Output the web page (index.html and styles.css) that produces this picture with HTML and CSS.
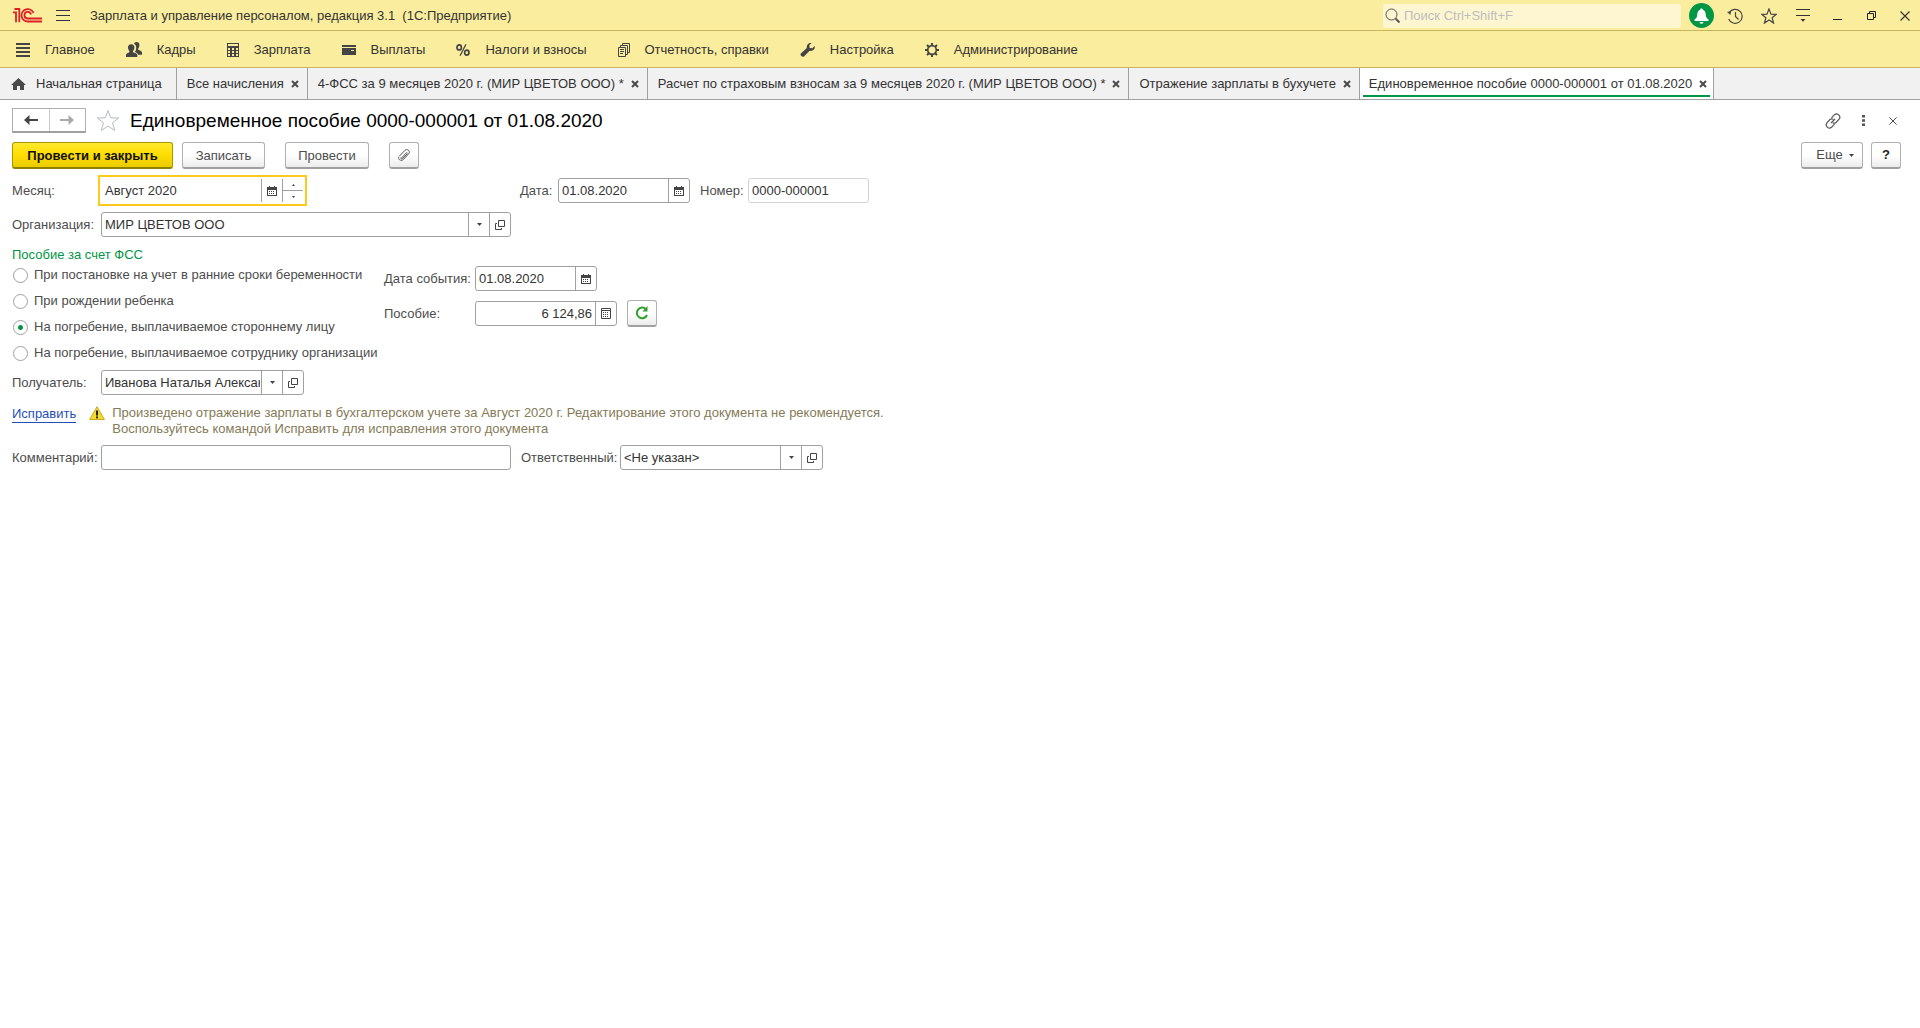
FILE: index.html
```html
<!DOCTYPE html>
<html lang="ru">
<head>
<meta charset="utf-8">
<title>Зарплата и управление персоналом, редакция 3.1 (1С:Предприятие)</title>
<link rel="stylesheet" href="styles.css">
</head>
<body>
<svg class="sprite" aria-hidden="true">
  <symbol id="calendar" viewBox="0 0 10 10"><path d="M0 1h2V0h1v1h4V0h1v1h2v9H0zM1 4v5h8V4z" fill="#444" fill-rule="evenodd"/><path d="M2 5h1v1H2zM4 5h1v1H4zM6 5h1v1H6zM2 7h1v1H2zM4 7h1v1H4zM6 7h1v1H6z" fill="#444"/></symbol>
  <symbol id="calc" viewBox="0 0 10 11"><path d="M.5.5h9v10h-9zM0 2.500h10" fill="none" stroke="#444"/><path d="M2 4h1v1H2zM4 4h1v1H4zM6 4h1v1H6zM2 6h1v1H2zM4 6h1v1H4zM6 6h1v1H6zM2 8h1v1H2zM4 8h1v1H4zM6 8h1v1H6z" fill="#444"/></symbol>
  <symbol id="down" viewBox="0 0 5 3"><path d="M0 0h5L2.500 3z" fill="#444"/></symbol>
  <symbol id="open" viewBox="0 0 10 10"><path d="M3.500.5h6v6h-6zM2 3.500H.5v6h6V8" fill="none" stroke="#444"/></symbol>
  <symbol id="cross" viewBox="0 0 8 8"><path d="M1 1l6 6M7 1L1 7" fill="none" stroke="#4a4a4a" stroke-width="2"/></symbol>
  <symbol id="thin-cross" viewBox="0 0 10 10"><path d="M.5.5l9 9M9.500.5l-9 9" fill="none" stroke="#333" stroke-width="1.100"/></symbol>
</svg>

<header class="titlebar">
  <svg class="logo" width="30" height="15" viewBox="0 0 30 15" fill="none" stroke="#dd1f26" stroke-width="1.800"><path d="M0 4.300h3V14.300M1.500 1H6.300V14.300"/><path d="M20.500 5A6.200 6.200 0 1 0 15 13.500H29M18 6.500A3.300 3.300 0 1 0 15 10.500H29"/></svg>
  <button class="icon-btn burger" aria-label="Меню"><svg width="14" height="12" viewBox="0 0 14 12"><path d="M0 .5h14M0 5.500h14M0 10.500h14" stroke="#333"/></svg></button>
  <h1 class="app-title">Зарплата и управление персоналом, редакция 3.1&nbsp; (1С:Предприятие)</h1>
  <label class="search">
    <svg width="16" height="16" viewBox="0 0 16 16" fill="none" stroke="#555"><circle cx="6.500" cy="6.500" r="5.500"/><path d="M10.500 10.500l4 4" stroke-width="2"/></svg>
    <input type="search" aria-label="Поиск" placeholder="Поиск Ctrl+Shift+F">
  </label>
  <div class="window-tools">
    <button class="icon-btn" aria-label="Уведомления"><svg width="25" height="25" viewBox="0 0 25 25"><circle cx="12.500" cy="12.500" r="12.500" fill="#009646"/><path d="M12.500 5.500c.8 0 1.300.5 1.400 1.200 2 .7 2.600 2.400 2.800 4.600.2 2.700.8 4 2.800 5.200v1.500h-14v-1.500c2-1.200 2.600-2.500 2.800-5.200.2-2.200.8-3.900 2.800-4.600.1-.7.6-1.200 1.400-1.200zM10.500 19h4c-.3 1.200-1 1.800-2 1.800s-1.700-.6-2-1.800z" fill="#fff"/></svg></button>
    <button class="icon-btn" aria-label="История"><svg width="16" height="16" viewBox="0 0 16 16" fill="none" stroke="#444" stroke-width="1.200"><path d="M2.300 4.500A7 7 0 1 1 1.700 11"/><path d="M8.500 4v4.500l3 3"/><path d="M0 4l4-1-.5 4z" fill="#444" stroke="none"/></svg></button>
    <button class="icon-btn" aria-label="Избранное"><svg width="16" height="16" viewBox="0 0 16 16" fill="none" stroke="#444" stroke-width="1.200"><path d="M8 .9l2 5.200 5.300.2-4.200 3.400 1.500 5.400L8 12l-4.600 3.100 1.500-5.400L.7 6.300 6 6.100z"/></svg></button>
    <button class="icon-btn" aria-label="Настройки панели"><svg width="14" height="13" viewBox="0 0 14 13"><path d="M0 .5h14M0 6.500h14" stroke="#333"/><path d="M4.500 10h5L7 12.800z" fill="#333"/></svg></button>
    <button class="icon-btn" aria-label="Свернуть"><svg width="9" height="9" viewBox="0 0 9 9"><path d="M0 8.500h9" stroke="#222"/></svg></button>
    <button class="icon-btn" aria-label="Восстановить"><svg width="9" height="9" viewBox="0 0 9 9"><path d="M.5 2.500h6v6h-6zM2.500 2.500v-2h6v6h-2" fill="none" stroke="#222"/></svg></button>
    <button class="icon-btn" aria-label="Закрыть окно"><svg width="10" height="10"><use href="#thin-cross"/></svg></button>
  </div>
</header>

<nav class="sections">
  <a href="#"><svg width="14" height="14" viewBox="0 0 14 14"><path d="M0 1h14M0 5h14M0 9h14M0 13h14" stroke="#444" stroke-width="2"/></svg>Главное</a>
  <a href="#"><svg width="16" height="15" viewBox="0 0 16 15" fill="#444"><path d="M10.500 0c1.900 0 3 1.200 2.900 3.200-.1 1.600-.6 2.700-1.200 3.300v1.300c1.500.7 3.700 1.200 3.800 2.700v2.300h-4c-.2-1.600-1.600-2.200-3.200-2.800.8-1 1.400-2.400 1.400-4.300 0-1.900-.8-3.200-2.200-3.900C8.300.7 9.200 0 10.500 0z"/><path d="M5.200 2.200C7.300 2.200 8.500 3.500 8.400 5.500 8.300 7.200 7.700 8.300 7 9v1.200c1.500.7 4.200 1.100 4.300 2.600V15H0v-2.200c.1-1.500 2-1.900 3.400-2.600V9c-.7-.7-1.300-1.800-1.400-3.500-.1-2 1.100-3.300 3.200-3.300z"/></svg>Кадры</a>
  <a href="#"><svg width="12" height="14" viewBox="0 0 12 14"><path d="M0 0h12v14H0zM1 1v2h10V1zM1 5v2h2V5zM5 5v2h2V5zM9 5v2h2V5zM1 8v2h2V8zM5 8v2h2V8zM9 8v2h2V8zM1 11v2h2v-2zM5 11v2h2v-2zM9 11v2h2v-2z" fill="#444" fill-rule="evenodd"/></svg>Зарплата</a>
  <a href="#"><svg width="14" height="10" viewBox="0 0 14 10"><path d="M0 0h14v2H0zM0 3h14v7H0zM9 5v1h3V5z" fill="#444" fill-rule="evenodd"/></svg>Выплаты</a>
  <a href="#"><svg width="14" height="12" viewBox="0 0 14 12" fill="none" stroke="#444" stroke-width="1.700"><ellipse cx="3.200" cy="3.400" rx="2.200" ry="2.500"/><ellipse cx="10.800" cy="8.600" rx="2.200" ry="2.500"/><path d="M10 .3L4 11.700" stroke-width="1.300"/></svg>Налоги и взносы</a>
  <a href="#"><svg width="12" height="14" viewBox="0 0 12 14" fill="none" stroke="#444"><path d="M.5 4.500h7v9h-7zM2.500 4V2.500h7v9H8M4.500 2V.5h7v9H10M2 6.500h4M2 8.500h4M2 10.500h3"/></svg>Отчетность, справки</a>
  <a href="#"><svg width="15" height="14" viewBox="0 0 15 14"><path d="M11.500 0L9.300 2.300l.4 2.600 2.600.4L14.700 3c.8 2.400-1.400 5.600-5 4.800L4 13.400C2.500 14.700-.5 12.300.8 10.500l6-5.400C6.200 2 8.700-.6 11.500 0z" fill="#444"/></svg>Настройка</a>
  <a href="#"><svg width="14" height="14" viewBox="0 0 14 14" fill="none" stroke="#444"><circle cx="7" cy="7" r="4.300" stroke-width="1.700"/><path d="M7 0v2.500M7 11.500V14M0 7h2.500M11.500 7H14M2 2l1.800 1.800M10.200 10.200L12 12M12 2l-1.800 1.800M3.800 10.200L2 12" stroke-width="2"/></svg>Администрирование</a>
</nav>

<nav class="tabs">
  <div class="tab home"><a href="#"><svg width="15" height="12" viewBox="0 0 15 12"><path d="M7.500 0L15 7h-2v5H9V8H6v4H2V7H0z" fill="#4a4a4a"/></svg>Начальная страница</a></div>
  <div class="tab"><a href="#">Все начисления</a><button class="icon-btn" aria-label="Закрыть"><svg width="8" height="8"><use href="#cross"/></svg></button></div>
  <div class="tab"><a href="#">4-ФСС за 9 месяцев 2020 г. (МИР ЦВЕТОВ ООО) *</a><button class="icon-btn" aria-label="Закрыть"><svg width="8" height="8"><use href="#cross"/></svg></button></div>
  <div class="tab"><a href="#">Расчет по страховым взносам за 9 месяцев 2020 г. (МИР ЦВЕТОВ ООО) *</a><button class="icon-btn" aria-label="Закрыть"><svg width="8" height="8"><use href="#cross"/></svg></button></div>
  <div class="tab"><a href="#">Отражение зарплаты в бухучете</a><button class="icon-btn" aria-label="Закрыть"><svg width="8" height="8"><use href="#cross"/></svg></button></div>
  <div class="tab active"><a href="#" aria-current="page">Единовременное пособие 0000-000001 от 01.08.2020</a><button class="icon-btn" aria-label="Закрыть"><svg width="8" height="8"><use href="#cross"/></svg></button></div>
</nav>

<main class="document">
  <div class="heading">
    <div class="history">
      <button aria-label="Назад"><svg width="14" height="10" viewBox="0 0 14 10"><path d="M5.500 0v3.900H14v2.200H5.500V10L0 5z" fill="#444"/></svg></button>
      <button aria-label="Вперед"><svg width="14" height="10" viewBox="0 0 14 10"><path d="M8.500 0v3.900H0v2.200h8.500V10L14 5z" fill="#aaa"/></svg></button>
    </div>
    <button class="icon-btn fav" aria-label="В избранное"><svg width="24" height="23" viewBox="0 0 24 23"><path d="M12 1.500l2.700 7.300 8 .2-6.200 4.800 2.200 7.700L12 17l-6.700 4.500 2.200-7.700L1.300 9l8-.2z" fill="none" stroke="#b4bcc6"/></svg></button>
    <h2>Единовременное пособие 0000-000001 от 01.08.2020</h2>
    <div class="heading-tools">
      <button class="icon-btn" aria-label="Ссылка"><svg width="16" height="16" viewBox="0 0 16 16" fill="none" stroke="#555" stroke-width="1.200"><path d="M6.500 4.800l3-3.100c2.600-2.400 7 1.500 4.600 4.500L11 9.500C10 10.300 8.600 10.300 7.700 9.700M9.500 11.200l-3 3.100c-2.600 2.400-7-1.500-4.600-4.500L5 6.500c1-.8 2.400-.8 3.300-.2M6 10l4-4"/></svg></button>
      <button class="icon-btn" aria-label="Действия"><svg width="3" height="11" viewBox="0 0 3 11"><path d="M0 0h3v2.500H0zM0 4.200h3v2.500H0zM0 8.500h3V11H0z" fill="#555"/></svg></button>
      <button class="icon-btn" aria-label="Закрыть документ"><svg width="8" height="8"><use href="#thin-cross"/></svg></button>
    </div>
  </div>

  <div class="commands">
    <button class="btn primary">Провести и закрыть</button>
    <button class="btn save">Записать</button>
    <button class="btn post">Провести</button>
    <button class="btn square" aria-label="Файлы"><svg width="14" height="14" viewBox="0 0 14 14" fill="none" stroke="#555"><path d="M2.500 8L8 2.300c2-2 5.700.7 3.800 3.300l-5.500 6C4 13.800.2 11 2 8.500M4.500 10L10 4.200M4 9.500c-.7 1 .6 2 1.500 1.200l5-5.200"/></svg></button>
    <button class="btn more">Еще <svg width="5" height="3"><use href="#down"/></svg></button>
    <button class="btn square help">?</button>
  </div>

  <form class="form">
    <div class="row first">
      <label class="lead" for="month">Месяц:</label>
      <div class="field month"><input id="month" value="Август 2020"><button type="button" aria-label="Календарь"><svg width="10" height="10"><use href="#calendar"/></svg></button><span class="spin"><button type="button" aria-label="Больше"><svg width="3" height="2" viewBox="0 0 3 2"><path d="M0 2l1.500-2L3 2z" fill="#444"/></svg></button><button type="button" aria-label="Меньше"><svg width="3" height="2" viewBox="0 0 3 2"><path d="M0 0h3L1.500 2z" fill="#444"/></svg></button></span></div>
      <label class="date-label" for="date">Дата:</label>
      <div class="field date"><input id="date" value="01.08.2020"><button type="button" aria-label="Календарь"><svg width="10" height="10"><use href="#calendar"/></svg></button></div>
      <label class="number-label" for="number">Номер:</label>
      <div class="field number"><input id="number" value="0000-000001" readonly></div>
    </div>
    <div class="row">
      <label class="lead" for="org">Организация:</label>
      <div class="field wide"><input id="org" value="МИР ЦВЕТОВ ООО"><button type="button" aria-label="Выбрать"><svg width="5" height="3"><use href="#down"/></svg></button><button type="button" aria-label="Открыть"><svg width="10" height="10"><use href="#open"/></svg></button></div>
    </div>
    <div class="benefit">
      <fieldset>
        <legend>Пособие за счет ФСС</legend>
        <label><input type="radio" name="kind">При постановке на учет в ранние сроки беременности</label>
        <label><input type="radio" name="kind">При рождении ребенка</label>
        <label><input type="radio" name="kind" checked>На погребение, выплачиваемое стороннему лицу</label>
        <label><input type="radio" name="kind">На погребение, выплачиваемое сотруднику организации</label>
      </fieldset>
      <div class="amounts">
        <div class="row">
          <label for="event">Дата события:</label>
          <div class="field event"><input id="event" value="01.08.2020"><button type="button" aria-label="Календарь"><svg width="10" height="10"><use href="#calendar"/></svg></button></div>
        </div>
        <div class="row">
          <label for="sum">Пособие:</label>
          <div class="field sum"><input id="sum" value="6 124,86"><button type="button" aria-label="Калькулятор"><svg width="10" height="11"><use href="#calc"/></svg></button></div>
          <button type="button" class="btn square" aria-label="Пересчитать"><svg width="14" height="14" viewBox="0 0 14 14"><path d="M11 3.300A5.300 5.300 0 1 0 12 9" fill="none" stroke="#2ca02c" stroke-width="2"/><path d="M12.500 0v5.500H7.500z" fill="#2ca02c"/></svg></button>
        </div>
      </div>
    </div>
    <div class="row recipient">
      <label class="lead" for="recipient">Получатель:</label>
      <div class="field ref"><input id="recipient" value="Иванова Наталья Александровна"><button type="button" aria-label="Выбрать"><svg width="5" height="3"><use href="#down"/></svg></button><button type="button" aria-label="Открыть"><svg width="10" height="10"><use href="#open"/></svg></button></div>
    </div>
    <div class="notice">
      <a href="#">Исправить</a>
      <svg width="16" height="14" viewBox="0 0 16 14"><path d="M8 .7L15.400 13.500H.6z" fill="#f5d92b" stroke="#c9a92a" stroke-linejoin="round"/><path d="M8 4.500v5M8 10.500v1.700" stroke="#222" stroke-width="2"/></svg>
      <p>Произведено отражение зарплаты в бухгалтерском учете за Август 2020 г. Редактирование этого документа не рекомендуется.<br>Воспользуйтесь командой Исправить для исправления этого документа</p>
    </div>
    <div class="row">
      <label class="lead" for="comment">Комментарий:</label>
      <div class="field wide"><input id="comment"></div>
      <label class="resp-label" for="resp">Ответственный:</label>
      <div class="field ref"><input id="resp" value="&lt;Не указан&gt;"><button type="button" aria-label="Выбрать"><svg width="5" height="3"><use href="#down"/></svg></button><button type="button" aria-label="Открыть"><svg width="10" height="10"><use href="#open"/></svg></button></div>
    </div>
  </form>
</main>
</body>
</html>
```
FILE: styles.css
```css
* { box-sizing: border-box; }

body {
  margin: 0;
  background: #fff;
  color: #333;
  font: 13px/16px "Liberation Sans", Arial, sans-serif;
}

button, input { font: inherit; color: inherit; }
a { color: inherit; text-decoration: none; }
svg { display: block; flex: none; }
.sprite { position: absolute; width: 0; height: 0; }

.icon-btn {
  display: flex;
  align-items: center;
  justify-content: center;
  padding: 0;
  border: 0;
  background: none;
}

/* Title bar */
.titlebar {
  display: flex;
  align-items: center;
  height: 31px;
  padding: 1px 5px 0 13px;
  background: #fbed9e;
  border-bottom: 1px solid #c6b55c;
}
.burger { margin-left: 13px; }
.app-title { flex: 1; margin: 0 0 0 20px; font-size: 13px; font-weight: 400; }
.search {
  display: flex;
  align-items: center;
  gap: 3px;
  width: 298px;
  height: 24px;
  padding: 0 2px;
  border-radius: 3px;
  background: #fdf6d0;
}
.search input { flex: 1; min-width: 0; padding: 0; border: 0; outline: 0; background: none; }
.search input::placeholder { color: #bdbdbd; }
.window-tools { display: flex; align-items: center; padding-left: 3px; }
.window-tools .icon-btn { width: 34px; height: 25px; }
.window-tools .icon-btn:last-child { width: 20px; margin-left: 7px; }

/* Sections */
.sections {
  display: flex;
  height: 37px;
  padding: 1px 0 0 16px;
  gap: 31px;
  background: #fbed9e;
  border-bottom: 1px solid #c6b55c;
}
.sections a { display: flex; align-items: center; gap: 15px; }

/* Open windows */
.tabs {
  display: flex;
  height: 32px;
  background: #f1f1f1;
  border-bottom: 1px solid #a0a0a0;
}
.tab {
  display: flex;
  align-items: center;
  gap: 7px;
  padding: 0 8px 0 10px;
  border-right: 1px solid #a0a0a0;
}
.tab.home { padding: 0 14px 0 11px; }
.tab a { display: flex; align-items: center; gap: 10px; white-space: nowrap; }
.tab.active { position: relative; padding: 0 6px 0 9px; background: #fff; }
.tab.active::after {
  content: "";
  position: absolute;
  left: 3px;
  right: 3px;
  bottom: 2px;
  height: 2px;
  background: #009646;
}

/* Document */
.document { padding: 8px 19px 24px 12px; }
.heading { display: flex; align-items: center; height: 25px; }
.history {
  display: flex;
  width: 74px;
  height: 25px;
  border: 1px solid #b0b0b0;
  border-bottom: 2px solid #a0a0a0;
}
.history button {
  display: flex;
  flex: 1;
  align-items: center;
  justify-content: center;
  padding: 0;
  border: 0;
  background: none;
}
.history button + button { border-left: 1px solid #ccc; }
.fav { margin-left: 10px; }
.heading h2 { flex: 1; margin: 0 0 0 10px; color: #000; font-size: 19px; line-height: 24px; font-weight: 400; }
.heading-tools { display: flex; }
.heading-tools .icon-btn { width: 30px; height: 20px; }
.heading-tools .icon-btn:last-child { width: 16px; margin-left: 7px; }

.commands { display: flex; margin-top: 9px; }
.btn {
  display: flex;
  align-items: center;
  justify-content: center;
  height: 27px;
  padding: 1px 12px 0;
  border: 1px solid #b0b0b0;
  border-bottom: 2px solid #a0a0a0;
  border-radius: 3px;
  background: linear-gradient(#fff 50%, #ececec);
  color: #4d4d4d;
}
.primary {
  width: 161px;
  border-color: #a89800 #a89800 #8f8100;
  background: linear-gradient(#ffe92e, #ffdd00 50%, #ebcc00);
  color: #111;
  font-weight: 700;
}
.save { width: 83px; margin-left: 9px; }
.post { width: 84px; margin: 0 20px; }
.square { width: 30px; padding: 0; }
.more { width: 62px; margin-left: auto; gap: 6px; padding: 0 4px 0 10px; }
.help { margin-left: 8px; color: #222; font-weight: 700; }

.form { margin-top: 6px; color: #4d4d4d; }
.row { display: flex; align-items: center; height: 25px; margin-top: 10px; }
.row.first { height: 31px; margin-top: 6px; }
.row.first + .row { margin-top: 6px; }
.lead { width: 89px; }

.field {
  display: flex;
  height: 25px;
  border: 1px solid #a0a0a0;
  border-radius: 3px;
  background: #fff;
  overflow: hidden;
}
.field input {
  flex: 1;
  min-width: 0;
  padding: 0 1px 0 3px;
  border: 0;
  outline: 0;
  background: none;
  color: #333;
}
.field button {
  display: flex;
  flex: none;
  align-items: center;
  justify-content: center;
  width: 21px;
  padding: 0;
  border: 0;
  border-left: 1px solid #a0a0a0;
  background: none;
}
.wide { width: 410px; }
.ref { width: 203px; }
.date { width: 132px; }
.event { width: 122px; }
.sum { width: 142px; margin-right: 10px; }
.sum input { padding-right: 3px; text-align: right; }
.number { width: 121px; border-color: #d4d4d4; }
.month {
  width: 209px;
  height: 31px;
  margin-left: -3px;
  padding: 2px;
  border: 2px solid #fcca1d;
  border-radius: 0;
}
.spin { display: flex; flex-direction: column; border-left: 1px solid #a0a0a0; }
.spin button { flex: 1; width: 20px; border-left: 0; }
.spin button + button { border-top: 1px solid #a0a0a0; }
.date-label { width: 38px; margin-left: 213px; }
.number-label { width: 48px; margin-left: 10px; }
.resp-label { width: 99px; margin-left: 10px; }

.benefit { display: flex; margin-top: 10px; }
fieldset { width: 372px; margin: 0; padding: 0; border: 0; }
legend { padding: 0; margin-bottom: 4px; color: #009646; }
fieldset label { display: flex; align-items: center; gap: 6px; height: 26px; white-space: nowrap; }
fieldset legend + label { height: 16px; margin-bottom: 5px; }
input[type="radio"] {
  appearance: none;
  width: 15px;
  height: 15px;
  margin: 0 0 0 1px;
  border: 1px solid #a0a0a0;
  border-radius: 50%;
  background: #fff;
}
input[type="radio"]:checked { background: radial-gradient(circle, #009646 2px, #fff 3px); }
.amounts { padding-top: 9px; }
.amounts label { width: 91px; }
.recipient { margin-top: 4px; }

.notice { display: flex; align-items: flex-start; margin-top: 10px; color: #857a56; }
.notice a { margin-top: 1px; color: #1f4fb8; border-bottom: 1px solid; }
.notice svg { margin: 1px 7px 0 13px; }
.notice p { margin: 0; }
.notice + .row { margin-top: 8px; }
```
